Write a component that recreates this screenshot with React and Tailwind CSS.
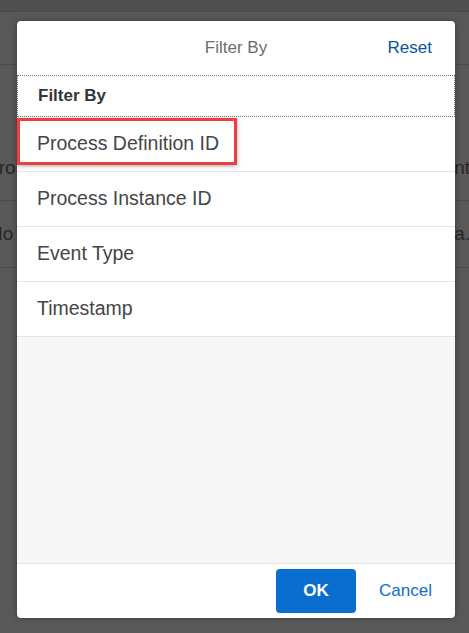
import React from "react";

const items = ["Process Definition ID", "Process Instance ID", "Event Type", "Timestamp"];

const Backdrop = () => (
  <div className="flex h-[633px] flex-col bg-[#595959] text-[19px] text-[#262626]">
    <div className="h-3 border-b border-[#4a4a4a] bg-[#505050]" />
    <div className="h-[53px] border-b border-[#4c4c4c]" />
    <div className="flex h-[136px] items-end justify-between border-b border-[#4c4c4c] pb-[18px]">
      <span className="-ml-[14px]">Pro</span>
      <span className="-mr-[1px]">ent</span>
    </div>
    <div className="flex h-[67px] items-center justify-between border-b border-[#4c4c4c]">
      <span className="-ml-[11px]">No</span>
      <span className="-mr-[1px]">a.</span>
    </div>
  </div>
);

export default function App() {
  return (
    <div className="relative h-[633px] w-[469px] overflow-hidden" style={{ fontFamily: "'Liberation Sans', Arial, sans-serif" }}>
      <Backdrop />
      <div className="absolute left-[17px] top-[21px] flex h-[597px] w-[438px] flex-col overflow-hidden rounded-[4px] bg-white shadow-[0_0_6px_rgba(0,0,0,0.35)]">
        <div className="relative flex h-[54px] shrink-0 items-center justify-center">
          <span className="text-[17px] text-[#6a6d70]">Filter By</span>
          <span className="absolute right-[23px] text-[17px] text-[#0854a0]">Reset</span>
        </div>
        <div className="flex h-[42px] shrink-0 items-center border border-dotted border-[#7a7a7a] pl-5">
          <span className="text-[17px] font-bold text-[#32363a]">Filter By</span>
        </div>
        <div className="flex flex-col">
          {items.map(t => (
            <div key={t} className="flex h-[55px] items-center border-b border-[#e5e5e5] pl-5">
              <span className="text-[19.5px] text-[#434649]">{t}</span>
            </div>
          ))}
        </div>
        <div className="flex-1 bg-[#f7f7f7]" />
        <div className="flex h-[55px] shrink-0 items-center justify-end gap-[23px] border-t border-[#e5e5e5] pr-[23px]">
          <button className="h-[44px] w-[80px] rounded-[4px] bg-[#0a6ed1] text-[17px] font-bold text-white">OK</button>
          <button className="text-[17px] text-[#0a6ed1]">Cancel</button>
        </div>
        <div className="absolute left-0 top-[97px] h-[47px] w-[220px] border-[3px] border-[#ef3d42] shadow-[0_1px_4px_rgba(0,0,0,0.35)]" />
      </div>
    </div>
  );
}
